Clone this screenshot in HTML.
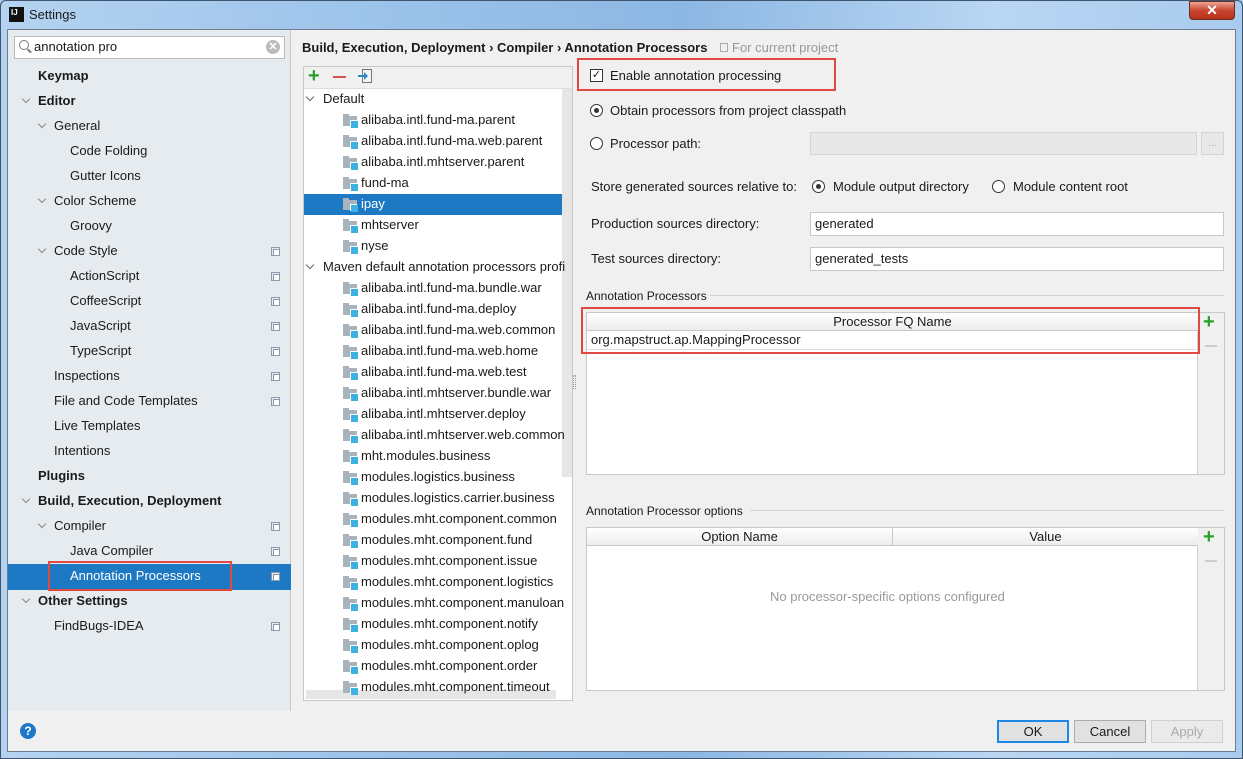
<!DOCTYPE html>
<html><head><meta charset="utf-8">
<style>
*{margin:0;padding:0;box-sizing:border-box}
body{width:1243px;height:759px;overflow:hidden;position:relative;font-family:"Liberation Sans",sans-serif;font-size:13px;color:#1a1a1a;background:#a9c9ea}
.a{position:absolute;white-space:nowrap}
.t{position:absolute;white-space:nowrap;line-height:16px}
.b{font-weight:bold}
.arr{position:absolute;width:6px;height:6px;border-right:1.3px solid #888;border-bottom:1.3px solid #888;transform:rotate(45deg)}
.cp{position:absolute;width:9px;height:9px;border:1px solid #8a9bb0;background:#e6ebf0}
.cp:after{content:"";position:absolute;left:1px;top:1px;width:5px;height:5px;border:1px solid #8a9bb0;background:#fff}
.fd{position:absolute;width:14px;height:10px;background:#a9b3bb}
.fd:before{content:"";position:absolute;left:0;top:-2px;width:6px;height:2px;background:#a9b3bb}
.fd:after{content:"";position:absolute;left:8px;top:5px;width:7px;height:7px;background:#3eb1e3;box-shadow:-1px -1px 0 #fff}
.inp{position:absolute;background:#fff;border:1px solid #c8c8c8}
.btn{position:absolute;height:23px;border:1px solid #adadad;background:#e1e1e1;text-align:center;line-height:21px}
.rad{position:absolute;width:13px;height:13px;border:1px solid #333;border-radius:50%;background:#fff}
.hdr{position:absolute;height:18px;background:linear-gradient(#fff,#ececec);border-bottom:1px solid #c8c8c8;text-align:center;line-height:17px}
</style></head><body>
<div class="a" style="left:0;top:0;width:1243px;height:759px;border:1px solid #3d556e;border-radius:6px 6px 0 0;background:linear-gradient(90deg,#b5d3f1 0%,#9cc3ea 30%,#8cb7e3 55%,#b9d6f3 80%,#a9cbee 100%)"></div>
<div class="a" style="left:9px;top:7px;width:15px;height:15px;background:#111;color:#fff;font-size:8px;font-weight:bold;line-height:11px;padding-left:2px">IJ</div>
<div class="t" style="left:29px;top:7px;font-size:13px">Settings</div>
<div class="a" style="left:1189px;top:1px;width:46px;height:19px;border:1px solid #6b2c22;border-radius:0 0 4px 4px;background:linear-gradient(#e9a497,#c9452f 50%,#b8321c);color:#fff;text-align:center;font-weight:bold;font-size:14px;line-height:17px">✕</div>
<div class="a" style="left:7px;top:29px;width:1229px;height:723px;background:#f0f0f0;border:1px solid #6f7d8c"></div>
<div class="a" style="left:8px;top:30px;width:283px;height:681px;background:#e6ebf0;border-right:1px solid #c5c9cd"></div>
<div class="inp" style="left:14px;top:36px;width:271px;height:23px;border-color:#bbb"></div>
<div class="a" style="left:19px;top:40px;width:10px;height:10px;border:1.3px solid #777;border-radius:50%"></div>
<div class="a" style="left:27px;top:50px;width:5px;height:1.5px;background:#777;transform:rotate(45deg)"></div>
<div class="t" style="left:34px;top:39px">annotation pro</div>
<div class="a" style="left:266px;top:40px;width:14px;height:14px;border-radius:50%;background:#bbb;color:#fff;font-size:11px;line-height:14px;text-align:center;font-weight:bold">✕</div>
<div class="a" style="left:8px;top:564px;width:283px;height:26px;background:#1d79c4"></div>
<div class="a" style="left:48px;top:561px;width:184px;height:30px;border:2px solid #e04a42"></div>

<div class="t b" style="left:38px;top:68px">Keymap</div>
<div class="arr" style="left:23px;top:96px"></div><div class="t b" style="left:38px;top:93px">Editor</div>
<div class="arr" style="left:39px;top:121px"></div><div class="t" style="left:54px;top:118px">General</div>
<div class="t" style="left:70px;top:143px">Code Folding</div>
<div class="t" style="left:70px;top:168px">Gutter Icons</div>
<div class="arr" style="left:39px;top:196px"></div><div class="t" style="left:54px;top:193px">Color Scheme</div>
<div class="t" style="left:70px;top:218px">Groovy</div>
<div class="arr" style="left:39px;top:246px"></div><div class="t" style="left:54px;top:243px">Code Style</div>
<div class="t" style="left:70px;top:268px">ActionScript</div>
<div class="t" style="left:70px;top:293px">CoffeeScript</div>
<div class="t" style="left:70px;top:318px">JavaScript</div>
<div class="t" style="left:70px;top:343px">TypeScript</div>
<div class="t" style="left:54px;top:368px">Inspections</div>
<div class="t" style="left:54px;top:393px">File and Code Templates</div>
<div class="t" style="left:54px;top:418px">Live Templates</div>
<div class="t" style="left:54px;top:443px">Intentions</div>
<div class="t b" style="left:38px;top:468px">Plugins</div>
<div class="arr" style="left:23px;top:496px"></div><div class="t b" style="left:38px;top:493px">Build, Execution, Deployment</div>
<div class="arr" style="left:39px;top:521px"></div><div class="t" style="left:54px;top:518px">Compiler</div>
<div class="t" style="left:70px;top:543px">Java Compiler</div>
<div class="t" style="left:70px;top:568px;color:#fff">Annotation Processors</div>
<div class="arr" style="left:23px;top:596px"></div><div class="t b" style="left:38px;top:593px">Other Settings</div>
<div class="t" style="left:54px;top:618px">FindBugs-IDEA</div>
<div class="cp" style="left:271px;top:247px"></div>
<div class="cp" style="left:271px;top:272px"></div>
<div class="cp" style="left:271px;top:297px"></div>
<div class="cp" style="left:271px;top:322px"></div>
<div class="cp" style="left:271px;top:347px"></div>
<div class="cp" style="left:271px;top:372px"></div>
<div class="cp" style="left:271px;top:397px"></div>
<div class="cp" style="left:271px;top:522px"></div>
<div class="cp" style="left:271px;top:547px"></div>
<div class="cp" style="left:271px;top:572px"></div>
<div class="cp" style="left:271px;top:622px"></div>

<div class="t b" style="left:302px;top:40px">Build, Execution, Deployment › Compiler › Annotation Processors</div>
<div class="a" style="left:720px;top:43px;width:8px;height:9px;border:1px solid #aaa"></div>
<div class="t" style="left:732px;top:40px;color:#999">For current project</div>

<div class="a" style="left:303px;top:66px;width:270px;height:635px;background:#fff;border:1px solid #c8c8c8"></div>
<div class="a" style="left:304px;top:67px;width:268px;height:22px;background:#f0f0f0;border-bottom:1px solid #ddd"></div>
<div class="t" style="left:308px;top:66px;color:#2aa02a;font-size:20px;line-height:20px;font-weight:bold">+</div>
<div class="a" style="left:333px;top:76px;width:13px;height:2px;background:#d9534f"></div>
<div class="a" style="left:362px;top:69px;width:10px;height:14px;border:1.5px solid #777;background:#f4f4f4"></div>
<div class="a" style="left:358px;top:75px;width:8px;height:2px;background:#2b88c9"></div>
<div class="a" style="left:364px;top:72px;width:0;height:0;border-top:4px solid transparent;border-bottom:4px solid transparent;border-left:4px solid #2b88c9"></div>
<div class="a" style="left:304px;top:194px;width:258px;height:21px;background:#1d79c4"></div>
<div class="a" style="left:562px;top:194px;width:10px;height:21px;background:#0d62a8"></div>
<div class="a" style="left:562px;top:89px;width:10px;height:388px;background:#e6e6e6"></div>
<div class="a" style="left:306px;top:690px;width:250px;height:9px;background:#e6e6e6"></div>
<div class="arr" style="left:307px;top:94px;border-color:#666"></div><div class="t" style="left:323px;top:91px">Default</div>
<div class="arr" style="left:307px;top:262px;border-color:#666"></div><div class="t" style="left:323px;top:259px">Maven default annotation processors profi</div>
<div class="t" style="left:361px;top:112px">alibaba.intl.fund-ma.parent</div>
<div class="t" style="left:361px;top:133px">alibaba.intl.fund-ma.web.parent</div>
<div class="t" style="left:361px;top:154px">alibaba.intl.mhtserver.parent</div>
<div class="t" style="left:361px;top:175px">fund-ma</div>
<div class="t" style="left:361px;top:196px;color:#fff">ipay</div>
<div class="t" style="left:361px;top:217px">mhtserver</div>
<div class="t" style="left:361px;top:238px">nyse</div>
<div class="t" style="left:361px;top:280px">alibaba.intl.fund-ma.bundle.war</div>
<div class="t" style="left:361px;top:301px">alibaba.intl.fund-ma.deploy</div>
<div class="t" style="left:361px;top:322px">alibaba.intl.fund-ma.web.common</div>
<div class="t" style="left:361px;top:343px">alibaba.intl.fund-ma.web.home</div>
<div class="t" style="left:361px;top:364px">alibaba.intl.fund-ma.web.test</div>
<div class="t" style="left:361px;top:385px">alibaba.intl.mhtserver.bundle.war</div>
<div class="t" style="left:361px;top:406px">alibaba.intl.mhtserver.deploy</div>
<div class="t" style="left:361px;top:427px">alibaba.intl.mhtserver.web.common</div>
<div class="t" style="left:361px;top:448px">mht.modules.business</div>
<div class="t" style="left:361px;top:469px">modules.logistics.business</div>
<div class="t" style="left:361px;top:490px">modules.logistics.carrier.business</div>
<div class="t" style="left:361px;top:511px">modules.mht.component.common</div>
<div class="t" style="left:361px;top:532px">modules.mht.component.fund</div>
<div class="t" style="left:361px;top:553px">modules.mht.component.issue</div>
<div class="t" style="left:361px;top:574px">modules.mht.component.logistics</div>
<div class="t" style="left:361px;top:595px">modules.mht.component.manuloan</div>
<div class="t" style="left:361px;top:616px">modules.mht.component.notify</div>
<div class="t" style="left:361px;top:637px">modules.mht.component.oplog</div>
<div class="t" style="left:361px;top:658px">modules.mht.component.order</div>
<div class="t" style="left:361px;top:679px">modules.mht.component.timeout</div>
<div class="fd" style="left:343px;top:116px"></div>
<div class="fd" style="left:343px;top:137px"></div>
<div class="fd" style="left:343px;top:158px"></div>
<div class="fd" style="left:343px;top:179px"></div>
<div class="fd" style="left:343px;top:200px"></div>
<div class="fd" style="left:343px;top:221px"></div>
<div class="fd" style="left:343px;top:242px"></div>
<div class="fd" style="left:343px;top:284px"></div>
<div class="fd" style="left:343px;top:305px"></div>
<div class="fd" style="left:343px;top:326px"></div>
<div class="fd" style="left:343px;top:347px"></div>
<div class="fd" style="left:343px;top:368px"></div>
<div class="fd" style="left:343px;top:389px"></div>
<div class="fd" style="left:343px;top:410px"></div>
<div class="fd" style="left:343px;top:431px"></div>
<div class="fd" style="left:343px;top:452px"></div>
<div class="fd" style="left:343px;top:473px"></div>
<div class="fd" style="left:343px;top:494px"></div>
<div class="fd" style="left:343px;top:515px"></div>
<div class="fd" style="left:343px;top:536px"></div>
<div class="fd" style="left:343px;top:557px"></div>
<div class="fd" style="left:343px;top:578px"></div>
<div class="fd" style="left:343px;top:599px"></div>
<div class="fd" style="left:343px;top:620px"></div>
<div class="fd" style="left:343px;top:641px"></div>
<div class="fd" style="left:343px;top:662px"></div>
<div class="fd" style="left:343px;top:683px"></div>
<div class="a" style="left:573px;top:375px;width:3px;height:14px;border-left:1px dotted #999;border-right:1px dotted #999"></div>

<div class="a" style="left:577px;top:58px;width:259px;height:33px;border:2px solid #e04a42"></div>
<div class="a" style="left:590px;top:69px;width:13px;height:13px;border:1px solid #333;background:#fff;font-size:11px;line-height:11px;text-align:center">✓</div>
<div class="t" style="left:610px;top:68px">Enable annotation processing</div>
<div class="rad" style="left:590px;top:104px"></div><div class="a" style="left:594px;top:108px;width:5px;height:5px;border-radius:50%;background:#333"></div>
<div class="t" style="left:610px;top:103px">Obtain processors from project classpath</div>
<div class="rad" style="left:590px;top:137px"></div>
<div class="t" style="left:610px;top:136px">Processor path:</div>
<div class="a" style="left:810px;top:132px;width:387px;height:23px;background:#e8e8e8;border:1px solid #d4d4d4"></div>
<div class="a" style="left:1201px;top:132px;width:23px;height:23px;background:#e8e8e8;border:1px solid #d4d4d4;color:#aaa;text-align:center;font-size:10px;line-height:22px">...</div>
<div class="t" style="left:591px;top:179px">Store generated sources relative to:</div>
<div class="rad" style="left:812px;top:180px"></div><div class="a" style="left:816px;top:184px;width:5px;height:5px;border-radius:50%;background:#333"></div>
<div class="t" style="left:833px;top:179px">Module output directory</div>
<div class="rad" style="left:992px;top:180px"></div>
<div class="t" style="left:1013px;top:179px">Module content root</div>
<div class="t" style="left:591px;top:216px">Production sources directory:</div>
<div class="inp" style="left:810px;top:212px;width:414px;height:24px"></div>
<div class="t" style="left:815px;top:216px">generated</div>
<div class="t" style="left:591px;top:251px">Test sources directory:</div>
<div class="inp" style="left:810px;top:247px;width:414px;height:24px"></div>
<div class="t" style="left:815px;top:251px">generated_tests</div>

<div class="t" style="left:586px;top:288px;font-size:12px">Annotation Processors</div>
<div class="a" style="left:710px;top:295px;width:514px;height:1px;background:#d0d0d0"></div>
<div class="a" style="left:586px;top:312px;width:639px;height:163px;background:#f0f0f0;border:1px solid #c8c8c8"></div>
<div class="a" style="left:587px;top:313px;width:611px;height:161px;background:#fff;border-right:1px solid #d0d0d0"></div>
<div class="hdr" style="left:587px;top:313px;width:611px">Processor FQ Name</div>
<div class="a" style="left:587px;top:349px;width:611px;height:1px;background:#ddd"></div>
<div class="t" style="left:591px;top:332px">org.mapstruct.ap.MappingProcessor</div>
<div class="a" style="left:581px;top:307px;width:619px;height:47px;border:2px solid #e04a42"></div>
<div class="t" style="left:1203px;top:312px;color:#2aa02a;font-size:20px;line-height:20px;font-weight:bold">+</div>
<div class="a" style="left:1205px;top:345px;width:12px;height:2px;background:#ccc"></div>

<div class="t" style="left:586px;top:503px;font-size:12px">Annotation Processor options</div>
<div class="a" style="left:750px;top:510px;width:474px;height:1px;background:#d0d0d0"></div>
<div class="a" style="left:586px;top:527px;width:639px;height:164px;background:#f0f0f0;border:1px solid #c8c8c8"></div>
<div class="a" style="left:587px;top:528px;width:611px;height:162px;background:#fff;border-right:1px solid #d0d0d0"></div>
<div class="hdr" style="left:587px;top:528px;width:306px;border-right:1px solid #c8c8c8">Option Name</div>
<div class="hdr" style="left:893px;top:528px;width:305px">Value</div>
<div class="t" style="left:770px;top:589px;color:#999">No processor-specific options configured</div>
<div class="t" style="left:1203px;top:527px;color:#2aa02a;font-size:20px;line-height:20px;font-weight:bold">+</div>
<div class="a" style="left:1205px;top:560px;width:12px;height:2px;background:#ccc"></div>

<div class="a" style="left:20px;top:723px;width:16px;height:16px;border-radius:50%;background:#1c78c9;color:#fff;font-weight:bold;font-size:12px;text-align:center;line-height:16px">?</div>
<div class="btn" style="left:997px;top:720px;width:72px;border:2px solid #1e88e5;line-height:19px">OK</div>
<div class="btn" style="left:1074px;top:720px;width:72px">Cancel</div>
<div class="btn" style="left:1151px;top:720px;width:72px;color:#aaa;background:#eaeaea;border-color:#d0d0d0">Apply</div>
</body></html>
